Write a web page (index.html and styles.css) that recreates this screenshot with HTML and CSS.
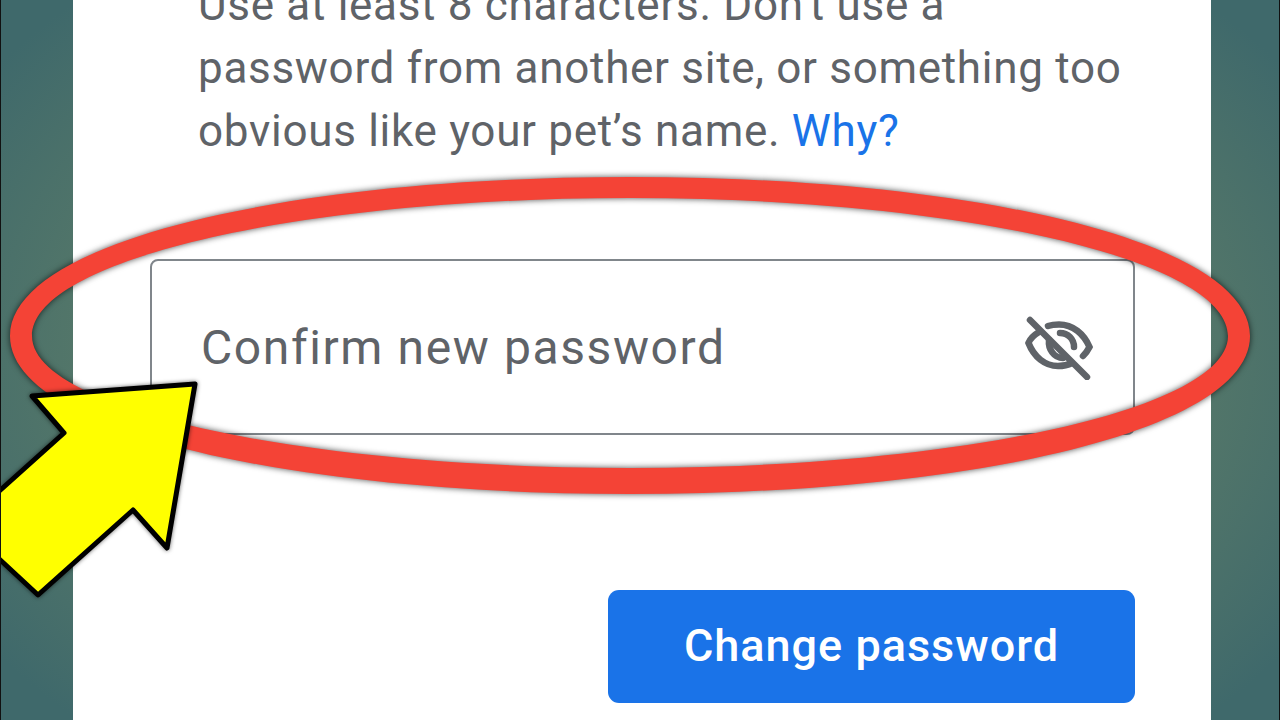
FILE: index.html
```html
<!DOCTYPE html>
<html lang="en">
<head>
    <meta charset="UTF-8">
    <meta name="viewport" content="width=device-width, initial-scale=1.0">
    <title>Change password</title>
    <link rel="stylesheet" href="styles.css">
</head>
<body>
    <main class="card">
        <p class="hint">Use at least 8 characters. Don't use a password from another site, or something too obvious like your pet’s name. <a class="hint__link" href="#">Why?</a></p>

        <div class="field">
            <span class="field__label">Confirm new password</span>
            <svg class="field__icon" viewBox="0 0 72 64" width="72" height="64" aria-hidden="true">
                <path class="eye" d="M15 16 C10 19 6 23 4.5 27 C10 41 21 50 34 50 C39 50 44 49 48 47"/>
                <path class="eye" d="M24 10 C27 9 31 8.5 35 8.5 C49 8.5 60 18 65.5 31 C64 34 62 37 59 40"/>
                <path class="eye" d="M25 24 C24 33 30 42 39 42"/>
                <path class="eye" d="M36 17 C44 17 50 23 50 31"/>
                <path class="eye" d="M6 4 L63 61"/>
            </svg>
        </div>

        <div class="actions">
            <button class="btn" type="button">Change password</button>
        </div>
    </main>

    <!-- red ring and yellow arrow drawn over the page -->
    <svg class="marks" viewBox="0 0 1280 720" width="1280" height="720" aria-hidden="true">
        <path class="marks__ring" fill-rule="evenodd" d="M10 336 C10 241 290 177 630 177 C970 177 1250 241 1250 336 C1250 431 970 494 630 494 C290 494 10 431 10 336 Z M32 336 C32 260 300 198 630 198 C960 198 1228 260 1228 336 C1228 409 960 468 630 468 C300 468 32 409 32 336 Z"/>
        <path class="marks__arrow" d="M195 384 L32 396 L64 433 L-4 494 L-4 556 L38 595 L133 510 L167 548 Z"/>
    </svg>
</body>
</html>
```

FILE: styles.css
```css
html, body {
    margin: 0;
    height: 100%;
}

body {
    position: relative;
    overflow: hidden;
    padding-left: 72px;
    box-sizing: border-box;
    width: 1280px;
    height: 720px;
    background: radial-gradient(ellipse 780px 520px at 50% 50%, #5a7c6e 0%, #547769 70%, #3f696b 100%);
    border-left: 1px solid #111;
    border-right: 1px solid #111;
    font-family: Roboto, "Noto Sans", sans-serif;
}

.card {
    display: flow-root;
    width: 1138px;
    height: 720px;
    background-color: #fff;
    padding: 0 76px 0 77px;
    box-sizing: border-box;
}

.hint {
    margin: -26px 0 0 48px;
    width: 935px;
    font-size: 44px;
    line-height: 63px;
    letter-spacing: 0.7px;
    color: #5f6368;
}

.hint__link {
    color: #1a73e8;
    text-decoration: none;
}

.field {
    display: flex;
    align-items: center;
    justify-content: space-between;
    height: 176px;
    margin-top: 96px;
    padding: 0 37px 0 49px;
    border: 2px solid #80868b;
    border-radius: 8px;
    box-sizing: border-box;
}

.field__label {
    font-size: 48px;
    letter-spacing: 1.6px;
    color: #5f6368;
}

.field__icon {
    flex: none;
    margin-top: 2px;
}

.eye {
    fill: none;
    stroke: #5f6368;
    stroke-width: 6.5;
    stroke-linecap: round;
}

.actions {
    display: flex;
    justify-content: flex-end;
    margin-top: 155px;
}

.btn {
    width: 527px;
    height: 113px;
    padding: 0 0 3px;
    border: 0;
    border-radius: 11px;
    background-color: #1a73e8;
    color: #fff;
    font-family: inherit;
    font-size: 45px;
    font-weight: 500;
    letter-spacing: 1px;
}

.marks {
    position: absolute;
    top: 0;
    left: -1px;
}

.marks__ring {
    fill: #f44336;
    filter: drop-shadow(0 0 3px rgba(0, 0, 0, 0.7));
}

.marks__arrow {
    fill: #ffff00;
    stroke: #000;
    stroke-width: 5;
    stroke-linejoin: round;
    filter: drop-shadow(0 0 2px rgba(0, 0, 0, 0.6));
}
```
